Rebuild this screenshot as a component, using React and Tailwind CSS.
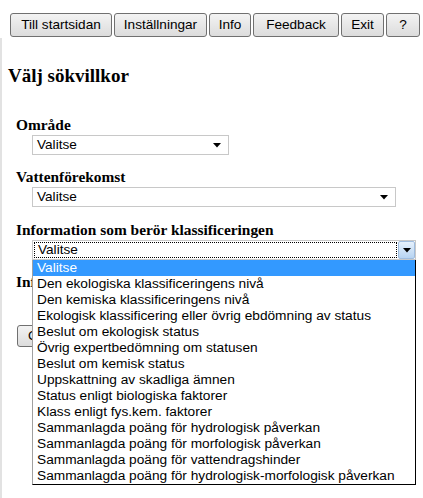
import React from "react";

const buttons = [
  { label: "Till startsidan", w: "w-[102px]" },
  { label: "Inställningar", w: "w-[93px]" },
  { label: "Info", w: "w-[42px]" },
  { label: "Feedback", w: "w-[86px]" },
  { label: "Exit", w: "w-[43px]" },
  { label: "?", w: "w-[34px]" },
];

const options = [
  "Valitse",
  "Den ekologiska klassificeringens nivå",
  "Den kemiska klassificeringens nivå",
  "Ekologisk klassificering eller övrig ebdömning av status",
  "Beslut om ekologisk status",
  "Övrig expertbedömning om statusen",
  "Beslut om kemisk status",
  "Uppskattning av skadliga ämnen",
  "Status enligt biologiska faktorer",
  "Klass enligt fys.kem. faktorer",
  "Sammanlagda poäng för hydrologisk påverkan",
  "Sammanlagda poäng för morfologisk påverkan",
  "Sammanlagda poäng för vattendragshinder",
  "Sammanlagda poäng för hydrologisk-morfologisk påverkan",
];

const sans = "font-['Liberation_Sans',Arial,sans-serif]";
const serif = "font-['Liberation_Serif','Times_New_Roman',serif]";

const Arrow = () => (
  <svg width="8" height="5" viewBox="0 0 8 5" className="shrink-0">
    <path d="M0 0 H8 L4 4.5 Z" fill="#000" />
  </svg>
);

const Select = ({ width }) => (
  <div
    className={`ml-[30px] ${width} h-[20px] flex items-center justify-between border border-[#c8c8c8] bg-white pl-[4px] pr-[7px] text-[13.6px] text-black ${sans}`}
  >
    <span>Valitse</span>
    <Arrow />
  </div>
);

const Label = ({ children, className = "" }) => (
  <div className={`ml-[14px] text-[15.4px] leading-[18px] font-bold text-black ${serif} ${className}`}>
    {children}
  </div>
);

export default function App() {
  return (
    <div className="relative w-[423px] h-[498px] bg-white overflow-hidden">
      {/* Top button bar */}
      <div className="flex gap-[2px] pl-[10px] pt-[13px]">
        {buttons.map((b) => (
          <button
            key={b.label}
            className={`${b.w} h-[24px] border border-[#707070] rounded-[3px] bg-gradient-to-b from-[#f3f3f3] to-[#dcdcdc] text-[13.6px] text-black ${sans} flex items-center justify-center`}
          >
            {b.label}
          </button>
        ))}
      </div>

      {/* Main form */}
      <div className="mt-[1px] border-l-2 border-[#e2e2e2] h-[460px]">
        <div className={`pt-[27px] pl-[6px] text-[19px] leading-[22px] font-bold text-black ${serif}`}>
          Välj sökvillkor
        </div>

        <Label className="mt-[29px]">Område</Label>
        <div className="mt-[1px]">
          <Select width="w-[197px]" />
        </div>

        <Label className="mt-[13px]">Vattenförekomst</Label>
        <div className="mt-[1px]">
          <Select width="w-[364px]" />
        </div>

        <Label className="mt-[14px]">Information som berör klassificeringen</Label>
        <div className="mt-[1px] ml-[30px] w-[384px] h-[20px] flex border border-[#c8c8c8] bg-white">
          <div className={`flex-1 m-[1px] border border-dotted border-black flex items-center pl-[3px] text-[13.6px] text-black ${sans}`}>
            Valitse
          </div>
          <div className="w-[17px] h-full border border-[#9fbde0] rounded-[2px] bg-gradient-to-b from-[#e6f1fc] to-[#b7d4f2] flex items-center justify-center">
            <Arrow />
          </div>
        </div>

        <Label className="mt-[13px]">Information om status</Label>
        <div className="mt-[1px]">
          <Select width="w-[364px]" />
        </div>
        <button
          className={`ml-[15px] mt-[13px] h-[22px] px-[10px] border border-[#707070] rounded-[3px] bg-gradient-to-b from-[#f3f3f3] to-[#dcdcdc] text-[13.6px] text-black ${sans}`}
        >
          OK
        </button>
      </div>

      {/* Open dropdown list */}
      <div className="absolute left-[32px] top-[260px] w-[384px] bg-white border-l border-l-[#a0a0a0] border-r border-r-black border-b border-b-black">
        {options.map((o, i) => (
          <div
            key={o}
            className={`h-[16px] leading-[16px] pl-[4px] text-[13.7px] whitespace-nowrap ${sans} ${
              i === 0 ? "bg-[#3399ff] text-white" : "text-black"
            }`}
          >
            {o}
          </div>
        ))}
      </div>
    </div>
  );
}
